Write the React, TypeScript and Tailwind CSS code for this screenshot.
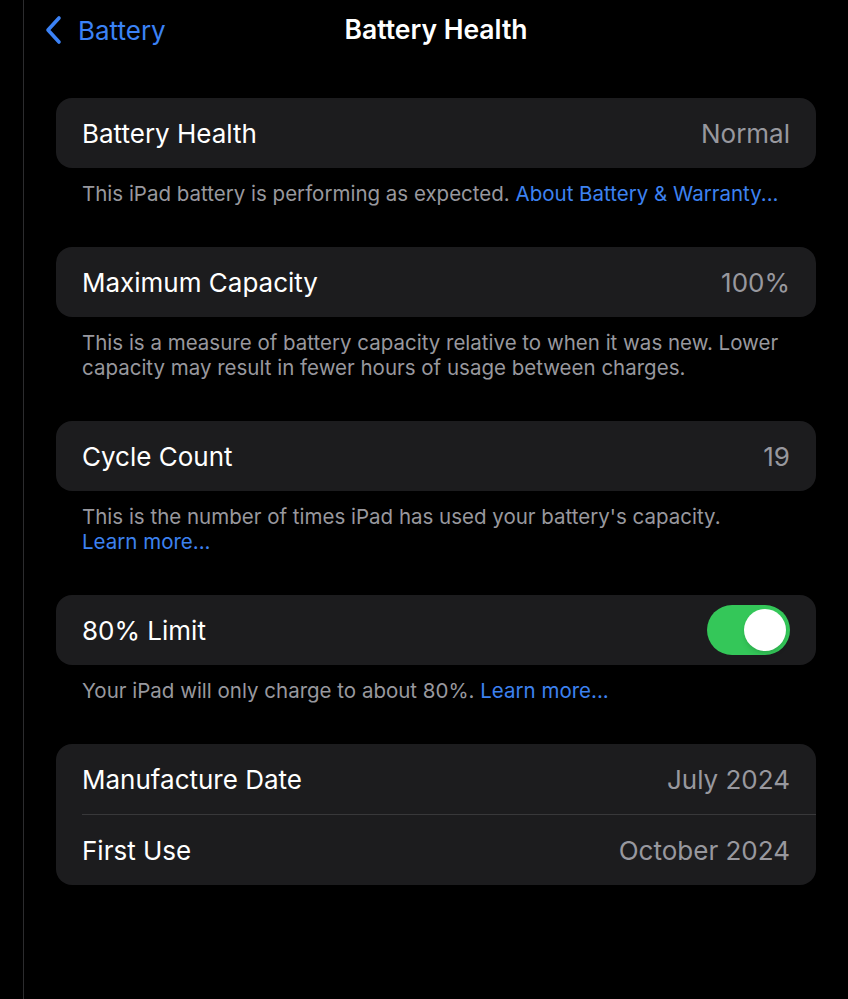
import React from "react";

const font = { fontFamily: "Inter, 'Noto Sans', 'Liberation Sans', sans-serif" };

function Row({ label, value, children }: { label: string; value?: string; children?: React.ReactNode }) {
  return (
    <div className="flex h-[70px] items-center justify-between px-[26px]">
      <span className="text-[26px] text-white">{label}</span>
      {value && <span className="text-[26px] text-[#98989e]">{value}</span>}
      {children}
    </div>
  );
}

function Footer({ children }: { children: React.ReactNode }) {
  return (
    <p className="px-[26px] pt-[13px] pb-[41px] text-[20.5px] leading-[25px] text-[#98989e]">
      {children}
    </p>
  );
}

function Toggle() {
  return (
    <div className="flex h-[50px] w-[83px] items-center justify-end rounded-full bg-[#34c759] px-[4px]">
      <div className="h-[42px] w-[42px] rounded-full bg-white shadow-md" />
    </div>
  );
}

export default function App() {
  return (
    <div className="flex min-h-[999px] w-[848px] bg-black" style={font}>
      <div className="w-[23px] shrink-0" />
      <div className="w-px shrink-0 bg-[#2c2c2e]" />
      <div className="flex-1">
        {/* nav bar */}
        <div className="relative flex h-[60px] items-center">
          <div className="flex items-center gap-[16px] pl-[20px] text-[#3b82f6]">
            <svg width="18" height="30" viewBox="0 0 18 30" fill="none">
              <path d="M15 3 L4 15 L15 27" stroke="currentColor" strokeWidth="3.6" strokeLinecap="round" strokeLinejoin="round" />
            </svg>
            <span className="text-[26px]">Battery</span>
          </div>
          <div className="absolute inset-x-0 text-center text-[26.5px] font-semibold text-white">Battery Health</div>
        </div>

        <div className="pl-[32px] pr-[32px] pt-[38px]">
          <div className="rounded-[16px] bg-[#1c1c1e]">
            <Row label="Battery Health" value="Normal" />
          </div>
          <Footer>
            This iPad battery is performing as expected.{" "}
            <span className="text-[#3d82f0]">About Battery &amp; Warranty...</span>
          </Footer>

          <div className="rounded-[16px] bg-[#1c1c1e]">
            <Row label="Maximum Capacity" value="100%" />
          </div>
          <Footer>
            This is a measure of battery capacity relative to when it was new. Lower
            <br />
            capacity may result in fewer hours of usage between charges.
          </Footer>

          <div className="rounded-[16px] bg-[#1c1c1e]">
            <Row label="Cycle Count" value="19" />
          </div>
          <Footer>
            This is the number of times iPad has used your battery's capacity.
            <br />
            <span className="text-[#3d82f0]">Learn more...</span>
          </Footer>

          <div className="rounded-[16px] bg-[#1c1c1e]">
            <Row label="80% Limit">
              <Toggle />
            </Row>
          </div>
          <Footer>
            Your iPad will only charge to about 80%. <span className="text-[#3d82f0]">Learn more...</span>
          </Footer>

          <div className="rounded-[16px] bg-[#1c1c1e]">
            <Row label="Manufacture Date" value="July 2024" />
            <div className="ml-[26px] h-px bg-[#38383a]" />
            <Row label="First Use" value="October 2024" />
          </div>
        </div>
      </div>
    </div>
  );
}
